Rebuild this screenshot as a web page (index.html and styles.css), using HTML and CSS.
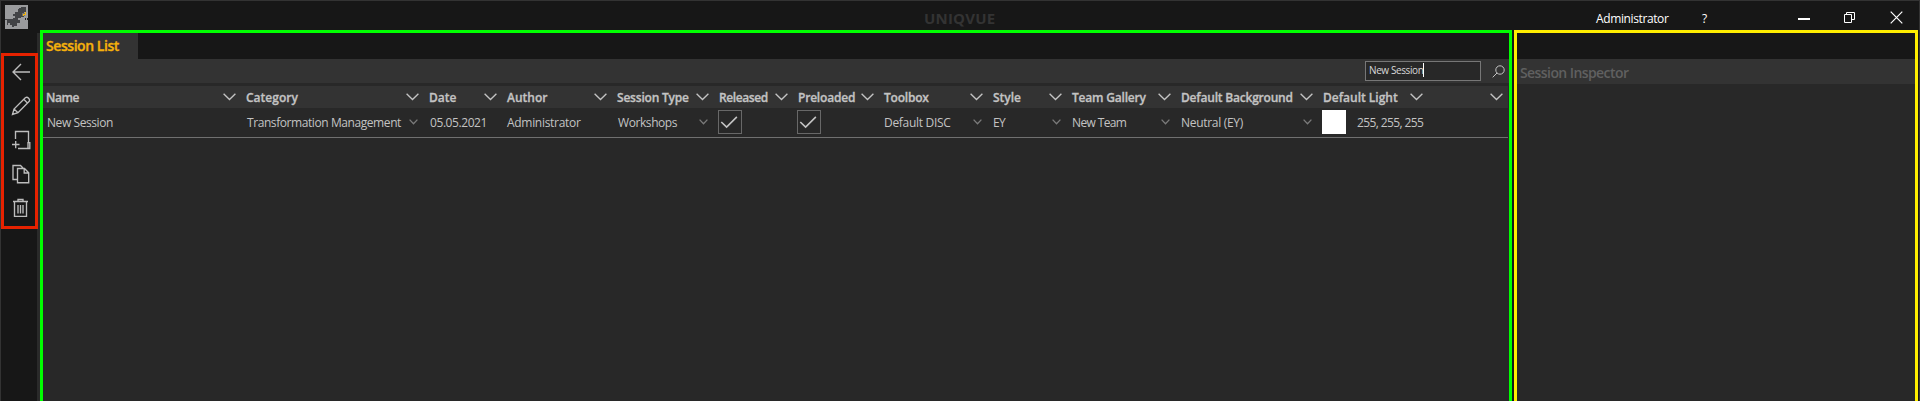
FILE: index.html
```html
<!DOCTYPE html>
<html lang="en">
<head>
<meta charset="utf-8">
<title>UNIQVUE</title>
<link rel="stylesheet" href="styles.css">
</head>
<body>
<svg class="defs" aria-hidden="true">
  <symbol id="chev" viewBox="0 0 13 8"><path d="M.6 .8L6.5 6.6L12.4 .8"/></symbol>
  <symbol id="chev-s" viewBox="0 0 9 6"><path d="M.6 .6L4.5 4.8L8.4 .6"/></symbol>
  <symbol id="check" viewBox="0 0 24 24"><path d="M2.5 12L8.3 17.5L19.5 6.5"/></symbol>
</svg>
<div class="window">
  <header class="titlebar">
    <svg class="logo" viewBox="0 0 23 24">
      <rect width="23" height="24" fill="#9a9b9d"/>
      <path fill="#424346" d="M14 3h2V2h5v5h-2v5h-3v1h-3v2h2v3h-3v3H8v-3h3v-3H8v-2h2v-2H8V9h2V7h3V4h1zM0 14h8v1h5v2h-2v3H9v2H7v-2H5v-2H3v2H2v-5H0z"/>
      <path fill="#77736d" d="M17 8h3v3h-3z"/>
      <path fill="#f5b60d" d="M20 7h1v3h-2v1h-1v-2h2z"/>
      <path fill="#222" d="M20 13h1v2h-1zM22 13h1v2h-1z"/>
    </svg>
    <div class="brand">UNIQVUE</div>
    <div class="account">Administrator</div>
    <div class="help">?</div>
    <div class="controls">
      <svg width="12" height="12" viewBox="0 0 12 12"><path d="M0 7h12" stroke-width="2"/></svg>
      <svg width="11" height="11" viewBox="0 0 11 11"><path d="M.5 2.5h7v8h-7zM2.5 2.5v-2h8v7h-3"/></svg>
      <svg width="13" height="13" viewBox="0 0 13 13"><path d="M.7 .7L12.3 12.3M12.3 .7L.7 12.3" stroke-width="1.2"/></svg>
    </div>
  </header>

  <div class="workspace">
    <nav class="sidebar">
      <div class="tools">
        <svg viewBox="0 0 20 20"><path d="M19 10H2M10 2L2 10L10 18"/></svg>
        <svg viewBox="0 0 20 20"><path d="M1.5 18.5L3 13L14.3 1.8Q16 .6 17.6 2.2Q19.3 4 18 5.6L7 16.7ZM3 13L7 16.7M12.8 3.3L16.7 7.2"/></svg>
        <svg viewBox="0 0 20 20"><path d="M4.5 9V1.5H17.5V13M7 18.5H17V12.6H18.8V18.5H17M1 14.5H8.5M4.7 11V18.2"/></svg>
        <svg viewBox="0 0 20 20"><path d="M6 15.5H2V1.5H9.5L12 4M6.5 4.5H13.5L17.7 8.7V18.7H6.5ZM13.2 4.5V9H17.7"/></svg>
        <svg viewBox="0 0 20 20"><path d="M2 3.5H17M7 3V1.5H12V3M3.5 4V18.3H15.5V4M7 7V15.5M9.5 7V15.5M12 7V15.5"/></svg>
      </div>
    </nav>

    <div class="gutter"></div>

    <main class="list-pane">
      <div class="tabs"><div class="tab">Session List</div></div>
      <div class="toolbar">
        <div class="search"><span>New Session</span><i class="caret"></i></div>
        <svg class="magnifier" viewBox="0 0 13 13"><circle cx="8" cy="5" r="4.2"/><path d="M5 8L.7 12.3"/></svg>
      </div>
      <div class="grid head">
        <div class="cell"><b class="t4">Name</b><svg class="chev"><use href="#chev"/></svg></div>
        <div class="cell"><b>Category</b><svg class="chev"><use href="#chev"/></svg></div>
        <div class="cell"><b>Date</b><svg class="chev"><use href="#chev"/></svg></div>
        <div class="cell"><b>Author</b><svg class="chev"><use href="#chev"/></svg></div>
        <div class="cell"><b class="t2">Session Type</b><svg class="chev"><use href="#chev"/></svg></div>
        <div class="cell"><b class="t4">Released</b><svg class="chev"><use href="#chev"/></svg></div>
        <div class="cell"><b class="t2">Preloaded</b><svg class="chev"><use href="#chev"/></svg></div>
        <div class="cell"><b class="t2">Toolbox</b><svg class="chev"><use href="#chev"/></svg></div>
        <div class="cell"><b>Style</b><svg class="chev"><use href="#chev"/></svg></div>
        <div class="cell"><b class="t2">Team Gallery</b><svg class="chev"><use href="#chev"/></svg></div>
        <div class="cell"><b class="t2">Default Background</b><svg class="chev"><use href="#chev"/></svg></div>
        <div class="cell"><b>Default Light</b><svg class="chev"><use href="#chev"/></svg></div>
        <div class="cell last"><svg class="chev"><use href="#chev"/></svg></div>
      </div>
      <div class="grid row">
        <div class="cell in1"><span>New Session</span></div>
        <div class="cell in1"><span>Transformation Management</span><svg class="chev-s"><use href="#chev-s"/></svg></div>
        <div class="cell in1"><span>05.05.2021</span></div>
        <div class="cell"><span class="t3">Administrator</span></div>
        <div class="cell in1"><span>Workshops</span><svg class="chev-s"><use href="#chev-s"/></svg></div>
        <div class="cell box"><svg class="check"><use href="#check"/></svg></div>
        <div class="cell box"><svg class="check"><use href="#check"/></svg></div>
        <div class="cell"><span class="t3">Default DISC</span><svg class="chev-s"><use href="#chev-s"/></svg></div>
        <div class="cell"><span class="t6">EY</span><svg class="chev-s"><use href="#chev-s"/></svg></div>
        <div class="cell"><span class="t6">New Team</span><svg class="chev-s"><use href="#chev-s"/></svg></div>
        <div class="cell"><span class="t3">Neutral (EY)</span><svg class="chev-s"><use href="#chev-s"/></svg></div>
        <div class="cell colour"><i class="swatch"></i><span class="t6">255, 255, 255</span></div>
        <div class="cell"></div>
      </div>
    </main>

    <aside class="inspector">
      <div class="inspector-head">Session Inspector</div>
    </aside>
  </div>
</div>
</body>
</html>
```
FILE: styles.css
```css
* { box-sizing: border-box; }
body { margin: 0; background: #171717; font: 12px "Open Sans", "Noto Sans", sans-serif; color: #c3c3c3; overflow: hidden; }
svg { fill: none; stroke: currentColor; flex: none; display: block; }
.defs { position: absolute; width: 0; height: 0; }
.window { height: 401px; border: 1px solid #333; border-bottom: 0; display: flex; flex-direction: column; }

.titlebar { height: 29px; flex: none; display: grid; grid-template-columns: 34px 889px 671px 106px 97px auto; align-items: center; color: #fff; }
.logo { width: 23px; height: 24px; margin: 4px 0 0 4px; stroke: none; align-self: start; }
.brand { grid-column: 3; font-weight: 700; font-size: 15px; letter-spacing: .2px; color: #333; line-height: 20px; margin-top: 5px; }
.account { letter-spacing: -.38px; margin: 5px 0 0 1px; }
.help { margin: 5px 0 0 1px; }
.controls { display: flex; align-items: center; margin-top: 4px; }
.controls svg + svg { margin-left: 34px; }
.controls svg:last-child { margin-left: 35px; }

.workspace { flex: 1; min-height: 0; display: grid; grid-template-columns: 36px 3px 1472px 2px 404px; }
.sidebar { position: relative; z-index: 1; padding-top: 23px; }
.tools { width: 37px; height: 176px; border: 3px solid #e62200; padding: 6px 0 0 7px; display: flex; flex-direction: column; gap: 14px; color: #bdbdbd; }
.tools svg { width: 20px; height: 20px; stroke-width: 1.35; }
.gutter { background: #2a2a2a; margin-top: 3px; }

.list-pane { border: 3px solid #00ff00; border-bottom: 0; background: #282828; }
.tabs { height: 26px; background: #171717; display: flex; }
.tab { width: 95px; background: #333; color: #f5b10c; font-size: 14px; font-weight: 600; letter-spacing: -.44px; line-height: 26px; padding-left: 3px; -webkit-text-stroke: .35px #f5b10c; white-space: nowrap; }
.toolbar { height: 24px; background: #333; display: flex; justify-content: flex-end; align-items: center; padding-right: 4px; }
.search { width: 116px; height: 20px; border: 1px solid #777; background: #282828; color: #d8d8d8; font-size: 10px; letter-spacing: -.4px; display: flex; align-items: flex-start; padding: 1px 0 0 3px; line-height: 14px; }
.caret { width: 1px; height: 14px; background: #fff; }
.magnifier { width: 13px; height: 13px; margin-left: 11px; }

.grid { display: grid; grid-template-columns: 200px 183px 78px 110px 102px 79px 86px 109px 79px 109px 142px 110px 1fr; padding-left: 3px; }
.cell { display: flex; align-items: center; justify-content: space-between; white-space: nowrap; min-width: 0; }
.head { height: 22px; margin-top: 3px; margin-right: 1px; background: #333; }
.head .cell { padding-right: 10px; }
.head .last { justify-content: flex-end; padding-right: 5px; }
.head b { font-weight: 600; -webkit-text-stroke: .3px currentColor; }
.chev { width: 13px; height: 8px; stroke-width: 1.35; margin-top: -1px; }
.row { height: 30px; border-bottom: 1px solid #707070; margin-right: 1px; letter-spacing: -.42px; }
.row .cell { padding-right: 11px; }
.row .in1 { padding-left: 1px; }
.chev-s { width: 9px; height: 6px; color: #7b7b7b; stroke-width: 1.3; margin-top: -1px; }
.row .box { padding: 0; margin-left: -1px; margin-top: -1px; }
.check { width: 24px; height: 24px; border: 1px solid #686868; stroke-width: 1.8; }
.row .colour { justify-content: flex-start; gap: 11px; margin-left: -1px; }
.swatch { width: 24px; height: 24px; background: #fff; flex: none; margin-top: -1px; }
.head .t2 { letter-spacing: -.2px; }
.head .t4 { letter-spacing: -.4px; }
.row .t3 { letter-spacing: -.3px; }
.row .t6 { letter-spacing: -.62px; }

.inspector { grid-column: 5; border: 3px solid #ffee00; border-bottom: 0; background: #282828; }
.inspector-head { border-top: 26px solid #171717; height: 51px; background: #333; color: #606060; font-size: 14px; font-weight: 600; letter-spacing: -.58px; line-height: 28px; padding-left: 3px; }
```
